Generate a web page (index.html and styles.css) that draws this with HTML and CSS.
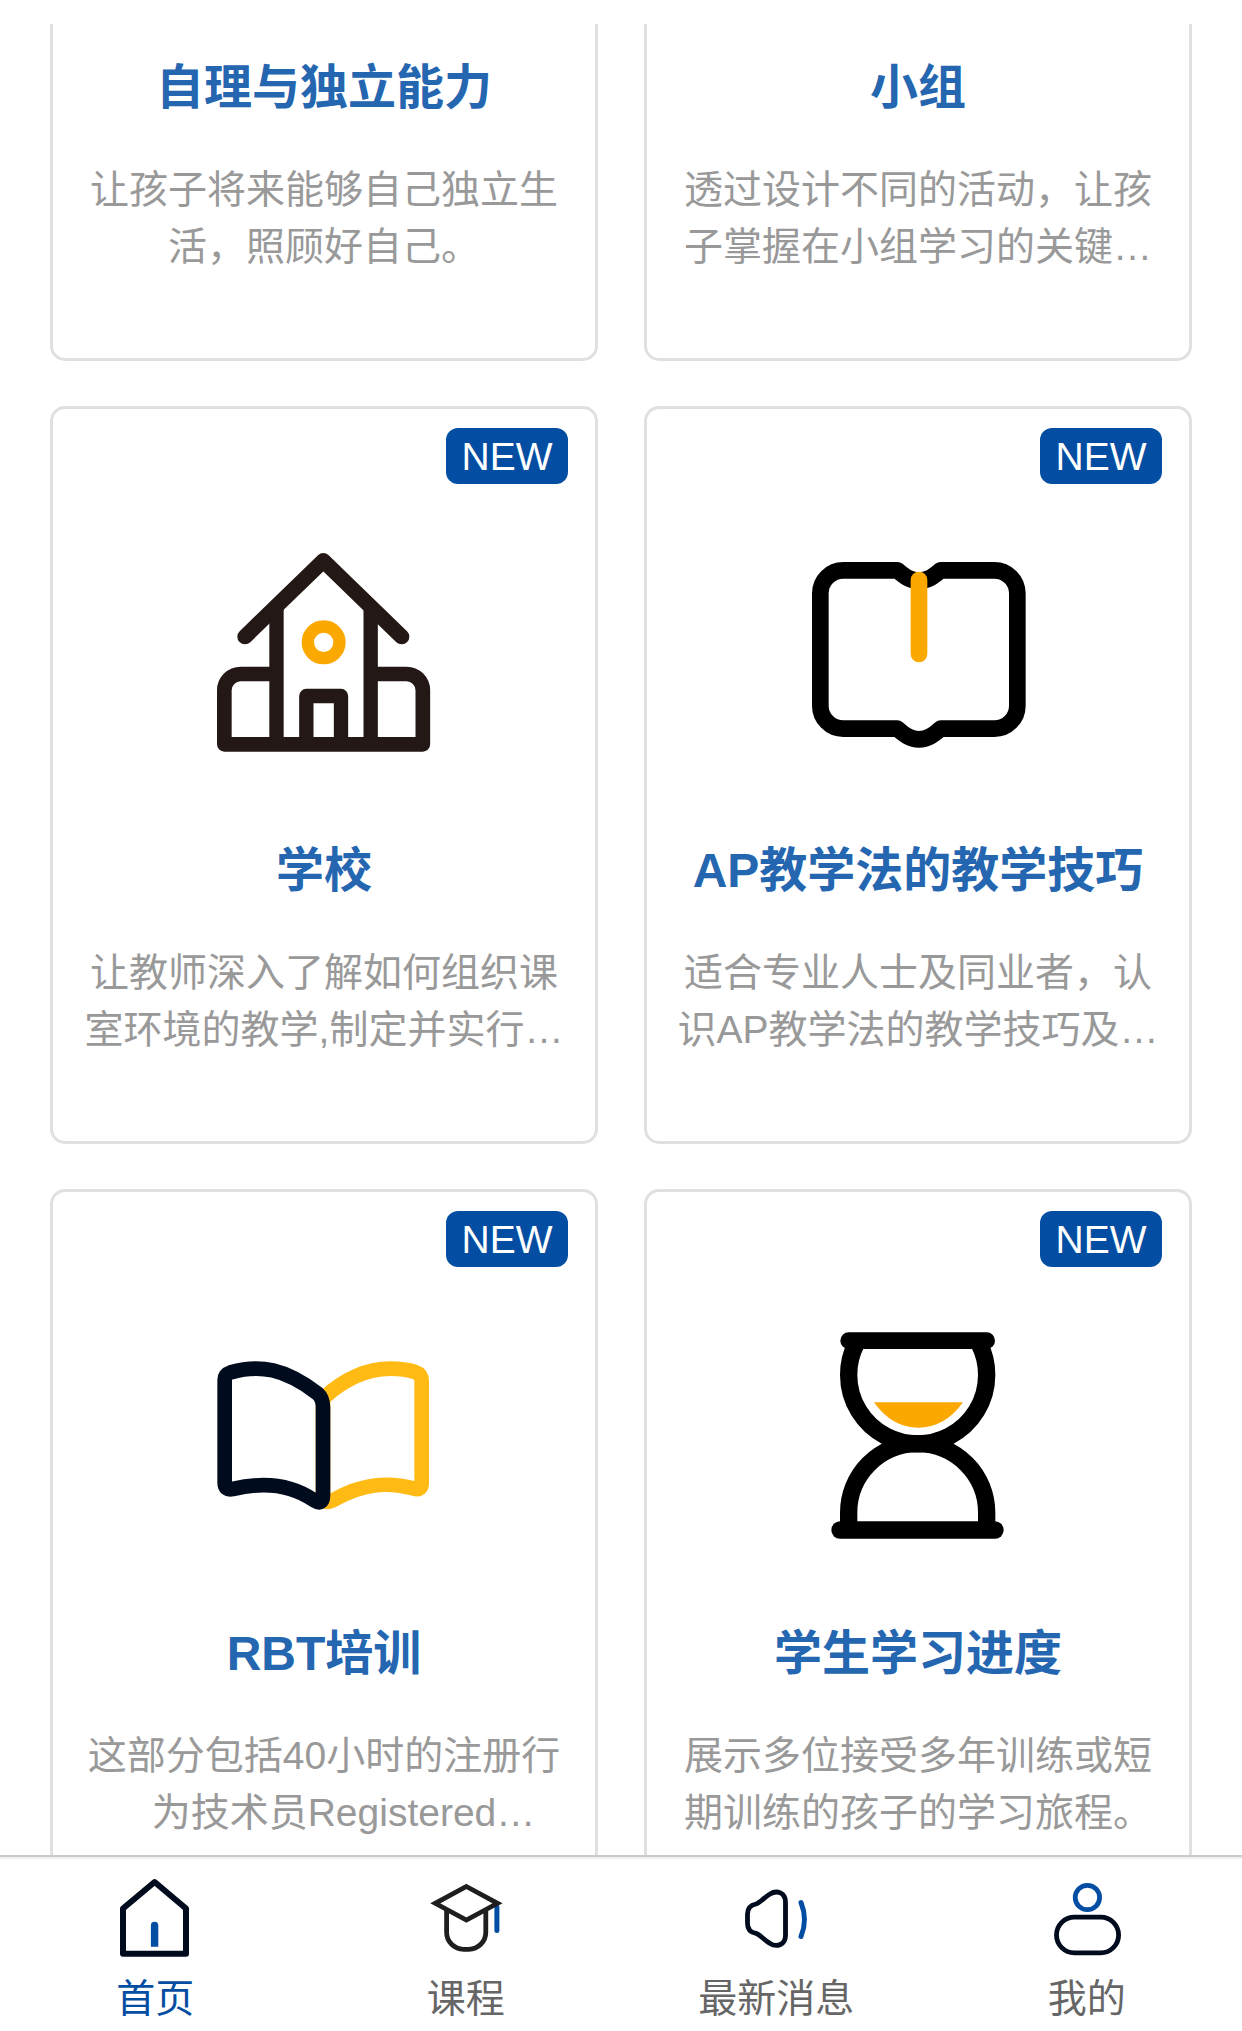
FILE: index.html
```html
<!DOCTYPE html>
<html lang="zh-CN">
<head>
    <meta charset="UTF-8">
    <meta name="viewport" content="width=device-width, initial-scale=1.0">
    <title>首页</title>
    <link rel="stylesheet" href="styles.css">
</head>
<body>
    <!-- Scrolling list of courses -->
    <div class="content">
      <div class="course-list">

        <div class="card">
          <div class="card-icon"></div>
          <div class="card-title">自理与独立能力</div>
          <div class="card-text">让孩子将来能够自己独立生<br>活，照顾好自己。</div>
        </div>

        <div class="card">
          <div class="card-icon"></div>
          <div class="card-title">小组</div>
          <div class="card-text">透过设计不同的活动，让孩<br>子掌握在小组学习的关键…</div>
        </div>

        <!-- School -->
        <div class="card">
          <div class="badge">NEW</div>
          <svg class="card-icon" viewBox="12 396 720 720" fill="none" stroke="#231815" stroke-width="43" stroke-linejoin="round">
            <path d="M135 710L370 482L605 710" stroke-width="46" stroke-linecap="round"/>
            <path d="M229.500 620V1033M512 620V1033"/>
            <path d="M229 822H122a49 49 0 0 0-49 49V1033H668.500V871a49 49 0 0 0-49-49H512" stroke-width="44"/>
            <path d="M319 1033V888H423V1033"/>
            <circle cx="371" cy="727" r="47.500" stroke="#fba900" stroke-width="37"/>
          </svg>
          <div class="card-title">学校</div>
          <div class="card-text">让教师深入了解如何组织课<br>室环境的教学,制定并实行…</div>
        </div>

        <!-- Teaching skills -->
        <div class="card">
          <div class="badge">NEW</div>
          <svg class="card-icon" viewBox="54 396 720 720" fill="none" stroke="#000" stroke-width="50" stroke-linejoin="round">
            <path d="M190 511H352C373 528 388 542 417 542C446 542 461 528 482 511H643a69 69 0 0 1 69 69V917a69 69 0 0 1-69 69H482C461 1003 446 1018 417 1018C388 1018 373 1003 352 986H190a69 69 0 0 1-69-69V580a69 69 0 0 1 69-69z"/>
            <path d="M417 540V762" stroke="#fba900" stroke-linecap="round"/>
          </svg>
          <div class="card-title">AP教学法的教学技巧</div>
          <div class="card-text">适合专业人士及同业者，认<br>识AP教学法的教学技巧及…</div>
        </div>

        <!-- RBT -->
        <div class="card">
          <div class="badge">NEW</div>
          <svg class="card-icon" viewBox="12 405 720 720" fill="none" stroke-width="44" stroke-linejoin="round">
            <path d="M369 655C430 600 500 566 570 566C600 566 627 570 645 576Q665 583 665 603V910Q665 932 643 926C560 903 485 912 404 958Q369 978 369 945Z" stroke="#ffbb14"/>
            <path d="M74 600Q74 583 92 577C180 552 255 566 352 640Q369 655 369 682V946Q369 978 342 961C270 911 190 905 98 927Q74 932 74 908Z" stroke="#000b1e"/>
          </svg>
          <div class="card-title">RBT培训</div>
          <div class="card-text">这部分包括40小时的注册行<br><span class="indent">为技术员Registered…</span></div>
        </div>

        <!-- Student progress -->
        <div class="card">
          <div class="badge">NEW</div>
          <svg class="card-icon" viewBox="54 405 720 720" fill="none" stroke="#000" stroke-width="52">
            <path d="M206 482H620" stroke-width="50" stroke-linecap="round"/>
            <path d="M229 490A207 207 0 1 0 597 490"/>
            <path d="M206 1050V998A207 207 0 0 1 620 998V1050"/>
            <path d="M180 1050H645" stroke-linecap="round"/>
            <path d="M282 667H549Q495 743 415 743Q335 743 282 667z" fill="#fba900" stroke="none"/>
          </svg>
          <div class="card-title">学生学习进度</div>
          <div class="card-text">展示多位接受多年训练或短<br>期训练的孩子的学习旅程。</div>
        </div>

      </div>
    </div>

    <!-- Bottom tab bar -->
    <div class="tab-bar">
      <div class="tab active">
        <svg class="tab-icon" viewBox="0 0 90 90" fill="none">
          <path d="M44.600 9L76 35.500V80.700H13V35.500Z" stroke="#000b1e" stroke-width="6" stroke-linejoin="round"/>
          <path d="M40.900 73.700V52.400a3.700 3.700 0 0 1 7.400 0V73.700z" fill="#034ea2"/>
        </svg>
        <div>首页</div>
      </div>
      <div class="tab">
        <svg class="tab-icon" viewBox="0 0 90 90" fill="none" stroke="#1e1e1e" stroke-width="4.800">
          <path d="M75.900 34V57.500" stroke="#034ea2" stroke-width="5" stroke-linecap="round"/>
          <path d="M25.600 37V59.300a17 17 0 0 0 17 17H47.800a17 17 0 0 0 17-17V37"/>
          <path d="M45.400 13.500L76.500 30.300L45.400 47L14.300 30.300Z"/>
        </svg>
        <div>课程</div>
      </div>
      <div class="tab">
        <svg class="tab-icon" viewBox="0 0 90 90" fill="none" stroke="#000b1e" stroke-width="4.800">
          <path d="M16.500 41C16.500 35 20 32 25 31C29 30 33 24.500 39 21C46 16.500 54.500 20 54.500 29V62.400C54.500 71.400 46 74.900 39 70.400C33 67 29 61.400 25 60.400C20 59.400 16.500 56.400 16.500 50.400Z"/>
          <path d="M70 29.500Q77 46.500 70 63.500" stroke="#034ea2" stroke-width="5" stroke-linecap="round"/>
        </svg>
        <div>最新消息</div>
      </div>
      <div class="tab">
        <svg class="tab-icon" viewBox="0 0 90 90" fill="none" stroke-width="4.800">
          <circle cx="45.400" cy="24.500" r="12.200" stroke="#034ea2"/>
          <rect x="14.500" y="44.100" width="62.100" height="35.800" rx="17.900" stroke="#000b1e"/>
        </svg>
        <div>我的</div>
      </div>
    </div>
</body>
</html>
```

FILE: styles.css
```css
* {
  box-sizing: border-box;
  margin: 0;
  padding: 0;
}

body {
  display: flex;
  flex-direction: column;
  height: 2031px;
  padding-top: 24px;
  overflow: hidden;
  background-color: #fff;
  font-family: "Liberation Sans", "Noto Sans CJK SC", sans-serif;
}

.content {
  flex: 1;
  min-height: 0;
  overflow: hidden;
}

/* list is scrolled down, the first row is cut off */
.course-list {
  display: grid;
  grid-template-columns: 548px 548px;
  grid-auto-rows: 738px;
  gap: 45px 46px;
  margin-top: -401px;
  padding: 0 50px;
}

.card {
  position: relative;
  display: flex;
  flex-direction: column;
  align-items: center;
  padding-top: 123px;
  border: 3px solid #e0e0e0;
  border-radius: 15px;
  text-align: center;
}

.badge {
  position: absolute;
  top: 19px;
  right: 27px;
  width: 122px;
  height: 56px;
  line-height: 58px;
  border-radius: 12px;
  background-color: #034ea2;
  color: #fff;
  font-size: 39px;
}

.card-icon {
  width: 240px;
  height: 240px;
  flex-shrink: 0;
}

.card-title {
  margin-top: 64px;
  line-height: 70px;
  color: #2566b0;
  font-size: 48px;
  font-weight: bold;
  white-space: nowrap;
}

.card-text {
  margin-top: 38px;
  line-height: 57px;
  color: #999;
  font-size: 39px;
  white-space: nowrap;
}

.indent {
  padding-left: 39px;
}

.tab-bar {
  display: flex;
  height: 176px;
  border-top: 2px solid #c8cacb;
  box-shadow: inset 0 2px 0 #eff0f0;
}

.tab {
  flex: 1;
  display: flex;
  flex-direction: column;
  align-items: center;
  padding-top: 16px;
  line-height: 50px;
  color: #666;
  font-size: 39px;
}

.tab.active {
  color: #034ea2;
}

.tab-icon {
  width: 90px;
  height: 90px;
  margin-bottom: 11px;
}
```
